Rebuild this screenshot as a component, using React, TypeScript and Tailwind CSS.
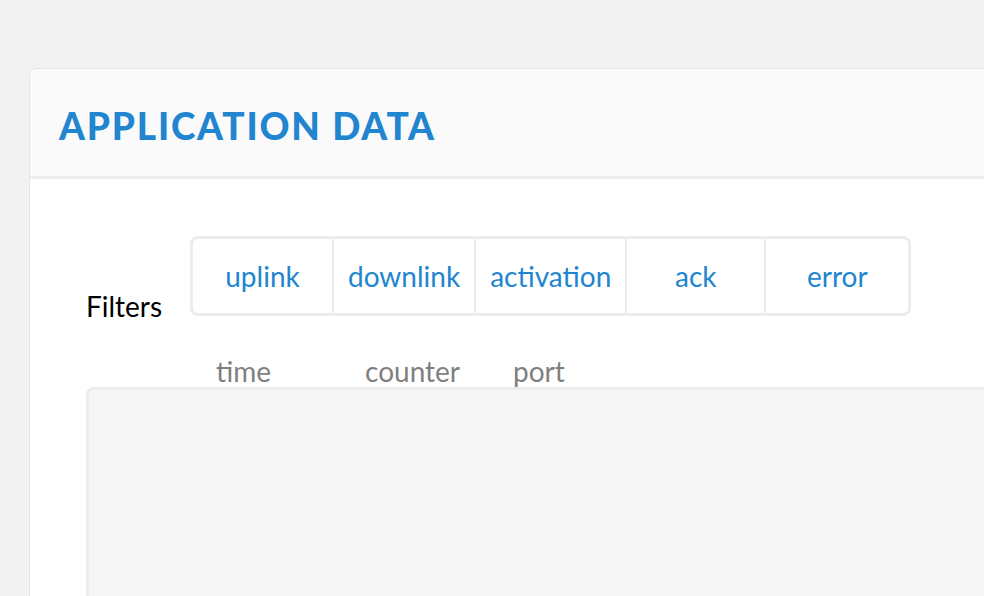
import React from "react";

const filters = ["uplink", "downlink", "activation", "ack", "error"];

export default function App() {
  return (
    <div
      className="h-[596px] w-[984px] overflow-hidden bg-[#f2f2f2] pt-[68px] pl-[29px]"
      style={{ fontFamily: "Lato, 'Noto Sans', sans-serif" }}
    >
      <div className="w-[1000px] h-[700px] rounded-tl-[8px] border border-[#e6e6e6] bg-white overflow-hidden">
        <div className="h-[110px] bg-[#fafafa] border-b-[3px] border-[#eeeeee] flex items-center pl-[29px] pt-[6px]">
          <h1 className="text-[37px] font-black tracking-[1.8px] text-[#2185d0] leading-none">
            APPLICATION DATA
          </h1>
        </div>
        <div className="pt-[57px] pl-[56px]">
          <div className="flex items-end">
            <div className="w-[104px] text-[28px] leading-[28px] text-black mb-[-4px]">Filters</div>
            <div className="flex h-[80px] rounded-[8px] border-[3px] border-[#ececec] bg-white overflow-hidden">
              {filters.map((f, i) => (
                <div
                  key={f}
                  className={`${i === filters.length - 1 ? "min-w-[144px]" : "min-w-[139px]"} px-[14px] flex items-center justify-center text-[28px] text-[#2185d0] ${
                    i > 0 ? "border-l-2 border-[#ececec]" : ""
                  }`}
                >
                  {f}
                </div>
              ))}
            </div>
          </div>
          <div className="mt-[39px] flex text-[28px] text-[#7f7f7f] leading-[32px]">
            <span className="ml-[130px]">time</span>
            <span className="ml-[94px]">counter</span>
            <span className="ml-[53px]">port</span>
          </div>
          <div className="h-[400px] rounded-tl-[8px] border-[3px] border-[#ececec] bg-[#f6f6f6]" />
        </div>
      </div>
    </div>
  );
}
